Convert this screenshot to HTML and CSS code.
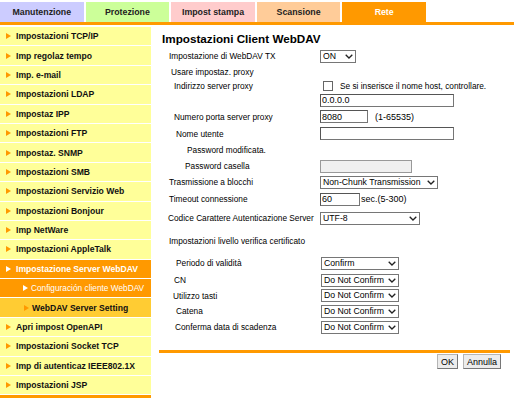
FILE: index.html
```html
<!DOCTYPE html>
<html lang="it">
<head>
<meta charset="utf-8">
<title>Impostazioni Client WebDAV</title>
<link rel="stylesheet" href="styles.css">
</head>
<body>
<div class="tabs">
  <div class="tab t-man">Manutenzione</div>
  <div class="tab t-pro">Protezione</div>
  <div class="tab t-imp">Impost stampa</div>
  <div class="tab t-sca">Scansione</div>
  <div class="tab t-rete">Rete</div>
</div>
<div class="topbar"></div>
<div class="main">
  <ul class="menu">
    <li class="item">Impostazioni TCP/IP</li>
    <li class="item">Imp regolaz tempo</li>
    <li class="item">Imp. e-mail</li>
    <li class="item">Impostazioni LDAP</li>
    <li class="item">Impostaz IPP</li>
    <li class="item">Impostazioni FTP</li>
    <li class="item">Impostaz. SNMP</li>
    <li class="item">Impostazioni SMB</li>
    <li class="item">Impostazioni Servizio Web</li>
    <li class="item">Impostazioni Bonjour</li>
    <li class="item">Imp NetWare</li>
    <li class="item">Impostazioni AppleTalk</li>
    <li class="item sel">Impostazione Server WebDAV</li>
    <li class="item sub sub-sel">Configuración cliente WebDAV</li>
    <li class="item sub sub-alt">WebDAV Server Setting</li>
    <li class="item">Apri impost OpenAPI</li>
    <li class="item">Impostazioni Socket TCP</li>
    <li class="item">Imp di autenticaz IEEE802.1X</li>
    <li class="item">Impostazioni JSP</li>
  </ul>
  <div class="content">
    <h1 class="title">Impostazioni Client WebDAV</h1>
    <div class="form">
      <div class="lbl i10">Impostazione di WebDAV TX</div>
      <div class="ctl"><span class="selw"><select class="sel-on"><option>ON</option></select><svg class="chev" width="8" height="5" viewBox="0 0 8 5"><path d="M0.7 0.7 L4 4 L7.3 0.7" fill="none" stroke="#222" stroke-width="1.3"/></svg></span></div>

      <div class="lbl i12">Usare impostaz. proxy</div>
      <div class="ctl"></div>

      <div class="lbl i15">Indirizzo server proxy</div>
      <div class="ctl"><span class="check"></span><span class="note">Se si inserisce il nome host, controllare.</span></div>

      <div class="lbl"></div>
      <div class="ctl"><input class="in-wide" type="text" value="0.0.0.0"></div>

      <div class="lbl i15">Numero porta server proxy</div>
      <div class="ctl"><input class="in-port" type="text" value="8080"><span class="hint">(1-65535)</span></div>

      <div class="lbl i17">Nome utente</div>
      <div class="ctl"><input class="in-wide" type="text" value=""></div>

      <div class="lbl i28">Password modificata.</div>
      <div class="ctl"></div>

      <div class="lbl i26">Password casella</div>
      <div class="ctl"><input class="in-pass" type="text" value="" disabled></div>

      <div class="lbl i10">Trasmissione a blocchi</div>
      <div class="ctl"><span class="selw"><select class="sel-chunk"><option>Non-Chunk Transmission</option></select><svg class="chev" width="8" height="5" viewBox="0 0 8 5"><path d="M0.7 0.7 L4 4 L7.3 0.7" fill="none" stroke="#222" stroke-width="1.3"/></svg></span></div>

      <div class="lbl i10">Timeout connessione</div>
      <div class="ctl"><input class="in-time" type="text" value="60"><span class="unit">sec.(5-300)</span></div>

      <div class="lbl i9">Codice Carattere Autenticazione Server</div>
      <div class="ctl"><span class="selw"><select class="sel-utf"><option>UTF-8</option></select><svg class="chev" width="8" height="5" viewBox="0 0 8 5"><path d="M0.7 0.7 L4 4 L7.3 0.7" fill="none" stroke="#222" stroke-width="1.3"/></svg></span></div>

      <div class="lbl i10">Impostazioni livello verifica certificato</div>
      <div class="ctl"></div>

      <div class="lbl i17">Periodo di validità</div>
      <div class="ctl"><span class="selw sw-conf"><select class="sel-conf"><option>Confirm</option></select><svg class="chev" width="8" height="5" viewBox="0 0 8 5"><path d="M0.7 0.7 L4 4 L7.3 0.7" fill="none" stroke="#222" stroke-width="1.3"/></svg></span></div>

      <div class="lbl i15">CN</div>
      <div class="ctl"><span class="selw sw-conf"><select class="sel-conf"><option>Do Not Confirm</option></select><svg class="chev" width="8" height="5" viewBox="0 0 8 5"><path d="M0.7 0.7 L4 4 L7.3 0.7" fill="none" stroke="#222" stroke-width="1.3"/></svg></span></div>

      <div class="lbl i14">Utilizzo tasti</div>
      <div class="ctl"><span class="selw sw-conf"><select class="sel-conf"><option>Do Not Confirm</option></select><svg class="chev" width="8" height="5" viewBox="0 0 8 5"><path d="M0.7 0.7 L4 4 L7.3 0.7" fill="none" stroke="#222" stroke-width="1.3"/></svg></span></div>

      <div class="lbl i17">Catena</div>
      <div class="ctl"><span class="selw sw-conf"><select class="sel-conf"><option>Do Not Confirm</option></select><svg class="chev" width="8" height="5" viewBox="0 0 8 5"><path d="M0.7 0.7 L4 4 L7.3 0.7" fill="none" stroke="#222" stroke-width="1.3"/></svg></span></div>

      <div class="lbl i16">Conferma data di scadenza</div>
      <div class="ctl"><span class="selw sw-conf"><select class="sel-conf"><option>Do Not Confirm</option></select><svg class="chev" width="8" height="5" viewBox="0 0 8 5"><path d="M0.7 0.7 L4 4 L7.3 0.7" fill="none" stroke="#222" stroke-width="1.3"/></svg></span></div>
    </div>
    <div class="bottombar"></div>
    <div class="actions">
      <button class="btn" type="button">OK</button>
      <button class="btn" type="button">Annulla</button>
    </div>
  </div>
</div>
</body>
</html>
```
FILE: styles.css
```css
html, body {
  margin: 0;
  padding: 0;
  background: #fff;
  font-family: "Liberation Sans", Arial, sans-serif;
  color: #000;
}

.tabs {
  display: flex;
  gap: 2px;
  padding-top: 2px;
  height: 20px;
}

.tab {
  width: 83.6px;
  display: flex;
  align-items: center;
  justify-content: center;
  font-weight: bold;
  font-size: 8.8px;
  color: #222;
}

.t-man { background: #ccccff; }
.t-pro { background: #ccff99; }
.t-imp { background: #ffcccc; }
.t-sca { background: #ffcc99; }
.t-rete { background: #ff9900; color: #fff; }

.topbar {
  width: 514px;
  height: 3px;
  background: #ff9900;
}

.main {
  display: flex;
  align-items: flex-start;
  gap: 8px;
  padding-top: 2px;
}

.menu {
  list-style: none;
  margin: 0;
  padding: 0;
  width: 151px;
  flex: none;
  border-bottom: 3px solid #ff9900;
}

.item {
  position: relative;
  height: 18.4px;
  margin-bottom: 1px;
  background: #ffff99;
  display: flex;
  align-items: center;
  padding-left: 16px;
  font-size: 8.6px;
  font-weight: bold;
  color: #111;
  white-space: nowrap;
}

.item::before {
  content: "";
  position: absolute;
  left: 6px;
  top: 50%;
  margin-top: -3px;
  border-left: 5px solid #ff9900;
  border-top: 3px solid transparent;
  border-bottom: 3px solid transparent;
}

.item.sel {
  background: #ff9900;
  color: #fff;
}

.item.sel::before {
  border-left-color: #fff;
}

.item.sub {
  padding-left: 31px;
}

.item.sub::before {
  left: 23px;
}

.item.sub-sel {
  background: #ff9900;
  color: #fff;
  font-weight: normal;
  font-size: 8.3px;
}

.item.sub-sel::before {
  border-left-color: #fff;
}

.item.sub-alt {
  background: #ffcc33;
  padding-left: 32px;
}

.item.sub-alt::before {
  left: 24px;
}

.content {
  width: 351px;
  flex: none;
}

.title {
  margin: 0;
  padding: 5px 0 0 3px;
  height: 16px;
  line-height: 14px;
  font-size: 11.7px;
  font-weight: bold;
}

.form {
  display: grid;
  grid-template-columns: 161px 1fr;
  grid-template-rows: 16px 15px 13px 16px 17px 17px 16px 16px 16px 18px 20px 26px 18px 16px 15px 16px 16px;
  font-size: 8.3px;
}

.lbl, .ctl {
  display: flex;
  align-items: center;
  white-space: nowrap;
}

.i9 { padding-left: 9px; }
.i10 { padding-left: 10px; }
.i12 { padding-left: 12px; }
.i14 { padding-left: 14px; }
.i15 { padding-left: 15px; }
.i16 { padding-left: 16px; }
.i17 { padding-left: 17px; }
.i26 { padding-left: 26px; }
.i28 { padding-left: 28px; }

input[type="text"] {
  box-sizing: border-box;
  height: 13px;
  margin: 0;
  padding: 0 1px;
  border: 1px solid #767676;
  border-top-color: #555;
  border-left-color: #555;
  font-family: "Liberation Sans", Arial, sans-serif;
  font-size: 9px;
  color: #000;
  background: #fff;
}

.in-wide { width: 134px; }
.in-port { width: 48px; }
.in-pass { width: 92px; background: #f0f0f0 !important; border-color: #999 !important; }
.in-time { width: 40px; }

.hint { margin-left: 7px; font-size: 9px; }
.unit { margin-left: 1px; font-size: 9px; }

.check {
  box-sizing: border-box;
  width: 10px;
  height: 10px;
  margin-left: 3px;
  border: 1px solid #666;
  background: #fff;
}

.note { margin-left: 7px; }

.selw {
  position: relative;
  display: inline-flex;
}

.sw-conf { margin-left: 1px; }

.chev {
  position: absolute;
  right: 3px;
  top: 4px;
  pointer-events: none;
}

select {
  box-sizing: border-box;
  -webkit-appearance: none;
  appearance: none;
  height: 13px;
  margin: 0;
  padding: 0 11px 0 2px;
  border: 1px solid #767676;
  border-radius: 0;
  font-family: "Liberation Sans", Arial, sans-serif;
  font-size: 8.7px;
  line-height: 11px;
  color: #000;
  background: #fff;
}

.sel-on { width: 36px; }
.sel-chunk { width: 118px; }
.sel-utf { width: 100px; }
.sel-conf { width: 78px; }

.bottombar {
  margin-top: 15px;
  height: 3px;
  background: #ff9900;
}

.actions {
  display: flex;
  justify-content: flex-end;
  gap: 5px;
  padding: 1px 9px 0 0;
}

.btn {
  box-sizing: border-box;
  height: 15px;
  padding: 0 3px;
  margin: 0;
  font-family: "Liberation Sans", Arial, sans-serif;
  font-size: 9px;
  color: #000;
  background: #ececec;
  border: 1px solid #b5b5b5;
  border-right-color: #777;
  border-bottom-color: #777;
  border-radius: 0;
}
```
